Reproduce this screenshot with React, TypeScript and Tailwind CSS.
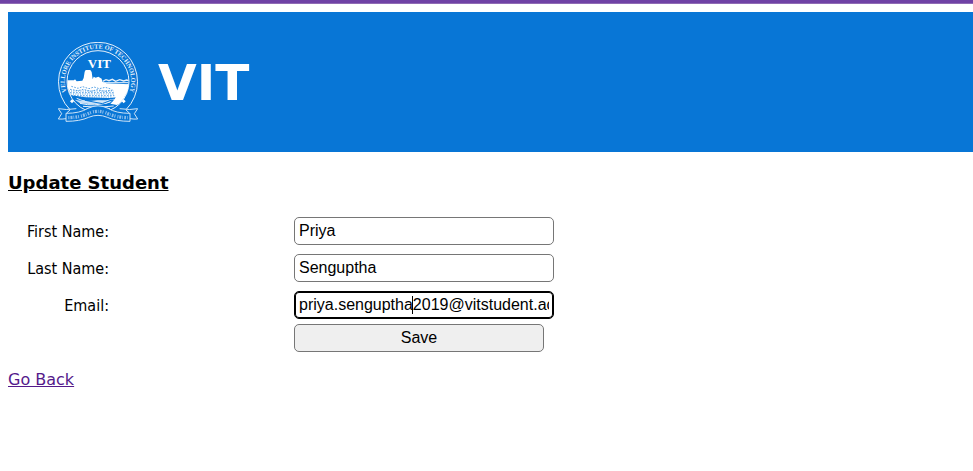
import type { ReactNode } from 'react';

function Crest() {
  return (
    <svg viewBox="24 21 240 240" className="size-20 shrink-0" role="img" aria-label="Vellore Institute of Technology crest" fill="none" stroke="#e6f1fb">
      <defs>
        <path id="ring" d="M48.4 167.7A99.5 99.5 0 1 1 239.6 167.7" />
        <clipPath id="disc">
          <circle cx="144" cy="140" r="92" />
        </clipPath>
      </defs>
      <path d="M60 224A118.5 118.5 0 1 1 228 224" strokeWidth="3" />
      <circle cx="144" cy="140" r="93" strokeWidth="3" />
      <text fill="#e6f1fb" stroke="none" fontSize="19" fontWeight="700" fontFamily="'Liberation Serif', serif">
        <textPath href="#ring" startOffset="50%" textAnchor="middle">VELLORE INSTITUTE OF TECHNOLOGY</textPath>
      </text>
      <text x="148" y="99" fill="#fff" stroke="none" fontSize="39" fontWeight="700" textAnchor="middle" fontFamily="'Liberation Serif', serif">VIT</text>
      <g clipPath="url(#disc)">
        <path d="M48 136h24l3-3 5 6 17-2 4-8 3-19 3-5h14l4 6 3 22 3-8 6 3 8-3 10 6 2 9 12 5 70 3v24l-30 14-32 3-70-2-56-8z" fill="#fff" stroke="none" />
        <path d="M158 139l10-5 9 3 10-4 10 6 12-5 12 4 9-3 10 3" strokeWidth="4" />
        <path d="M160 143h76" strokeWidth="3" />
        <path d="M64 154l20 6 14-5 19 6 15-5 16 5 18-4 17 5M60 163l24 4 16-4 22 6 20-5 22 5 25-4M60 173h135M63 182h130M68 191h118" stroke="#0876d6" strokeWidth="2" strokeDasharray="5 4" />
        <path d="M56 168h134M62 177h130M69 186h118" stroke="#0876d6" strokeWidth="2" strokeDasharray="3 4" />
        <path d="M237 146v25q-9 26-36 39l-20-4q18-14 21-35 10-17 35-25z" fill="#fff" stroke="none" />
        <path d="M74 194q31 7 68 2l44 2-17 8-42 2-37-3z" fill="#c6dff6" stroke="none" />
        <path d="M80 190q33 15 64 8 24 2 47-5M90 205q43 11 91-4M99 214q47 6 92-1M110 221q30-7 70 0" strokeWidth="3" />
        <path d="M105 196l52 10 31-12" stroke="#0876d6" strokeWidth="3" />
      </g>
      <path d="M66 193l6 6-6 6-6-6zM221 193l6 6-6 6-6-6z" fill="#fff" stroke="none" />
      <path d="M48 235q42 0 66-15 30-15 60 0 24 15 66 15v24q-42 0-68-12-28-12-56 0-26 12-68 12z" fill="#0876d6" stroke="#cfe4f7" strokeWidth="3" />
      <path d="M48 251q-12 2-23 1l10-16-10-15q22 5 54 0M240 251q12 2 23 1l-10-16 10-15q-22 5-54 0M50 234l10-9M238 234l-10-9" stroke="#cfe4f7" strokeWidth="3" />
      <path d="M55 248q37-1 64-14 25-10 50 0 27 13 64 14" strokeWidth="10" strokeDasharray="3 3 6 3 2 4 5 3 3 6" stroke="#8abdec" />
    </svg>
  );
}

const field =
  "h-7 w-full rounded-[5px] border border-[#767676] bg-white px-1 font-['Liberation_Sans',Arial,sans-serif] text-base text-black outline-none";

function Row({ id, label, children }: { id: string; label: string; children: ReactNode }) {
  return (
    <div className="flex items-center">
      <label htmlFor={id} className="mr-[185px] w-[101px] shrink-0 pt-0.5 text-right font-['DejaVu_Sans_Condensed','DejaVu_Sans',sans-serif] text-base">
        {label}
      </label>
      <div className="relative w-[260px]">{children}</div>
    </div>
  );
}

export default function App() {
  return (
    <div className="font-['DejaVu_Sans',Verdana,sans-serif] text-black">
      <div className="h-1 border-b border-[#8f6bb5] bg-[#6f42a5]" />
      <header className="mt-2 ml-2 flex items-center gap-5 bg-[#0876d6] px-[50px] py-[30px]">
        <Crest />
        <h1 className="pt-0.5 text-[50px] leading-none font-bold text-white">VIT</h1>
      </header>
      <main className="px-2 pt-[18px]">
        <h2 className="text-lg leading-[26px] font-bold underline">Update Student</h2>
        <form className="mt-[21px] flex flex-col" onSubmit={(e) => e.preventDefault()}>
          <div className="flex flex-col gap-[9px]">
            <Row id="first" label="First Name:">
              <input id="first" type="text" defaultValue="Priya" className={field} />
            </Row>
            <Row id="last" label="Last Name:">
              <input id="last" type="text" defaultValue="Senguptha" className={field} />
            </Row>
            <Row id="email" label="Email:">
              <input
                id="email"
                type="text"
                defaultValue="priya.senguptha2019@vitstudent.ac.in"
                className={`${field} ring-1 ring-black ring-inset border-black`}
              />
              <span className="absolute top-[5px] left-[118px] h-[18px] w-px bg-black" />
            </Row>
          </div>
          <button type="submit" className="mt-[5px] ml-[286px] h-7 w-[250px] rounded-[5px] border border-[#767676] bg-[#efefef] font-['Liberation_Sans',Arial,sans-serif] text-base">
            Save
          </button>
        </form>
        <a href="#students" className="mt-4 inline-block text-base text-[#551a8b] underline">
          Go Back
        </a>
      </main>
    </div>
  );
}
